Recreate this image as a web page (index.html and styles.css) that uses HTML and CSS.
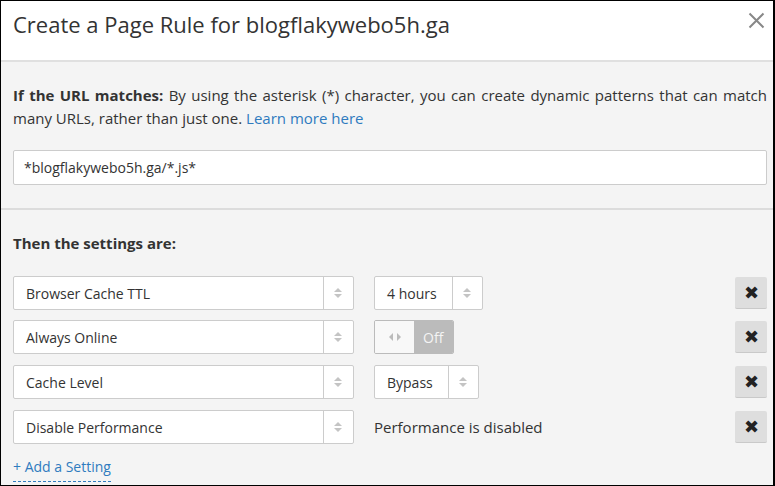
FILE: index.html
```html
<!DOCTYPE html>
<html lang="en">
  <head>
    <meta charset="UTF-8" />
    <meta name="viewport" content="width=device-width, initial-scale=1.0" />
    <title>Create a Page Rule</title>
    <link rel="stylesheet" href="styles.css">
  </head>
  <body>
    <div class="modal">
      <div class="modal__header">
        <h1>Create a Page Rule for blogflakywebo5h.ga</h1>
        <button type="button" class="close" aria-label="Close">
          <svg width="17" height="17" viewBox="0 0 17 17">
            <path d="M1.5 1.5 L15.5 15.5 M15.5 1.5 L1.5 15.5" stroke="#888" stroke-width="2" fill="none" />
          </svg>
        </button>
      </div>

      <div class="section section--url">
        <p class="help">
          <strong>If the URL matches:</strong> By using the asterisk (*) character, you can create dynamic patterns that can match many URLs, rather than just one. <a href="#">Learn more here</a>
        </p>
        <input class="field" type="text" value="*blogflakywebo5h.ga/*.js*" />
      </div>

      <div class="section section--settings">
        <h2>Then the settings are:</h2>

        <div class="rule">
          <div class="select select--setting"><span>Browser Cache TTL</span><i class="arrows"></i></div>
          <div class="select select--value ttl"><span>4 hours</span><i class="arrows"></i></div>
          <button type="button" class="remove">&#10006;</button>
        </div>

        <div class="rule">
          <div class="select select--setting"><span>Always Online</span><i class="arrows"></i></div>
          <div class="toggle">
            <span class="toggle__knob">
              <svg width="12" height="8" viewBox="0 0 12 8">
                <path d="M4 0 L0 4 L4 8 Z M8 0 L12 4 L8 8 Z" fill="#bbb" />
              </svg>
            </span>
            <span class="toggle__label">Off</span>
          </div>
          <button type="button" class="remove">&#10006;</button>
        </div>

        <div class="rule">
          <div class="select select--setting"><span>Cache Level</span><i class="arrows"></i></div>
          <div class="select select--value bypass"><span>Bypass</span><i class="arrows"></i></div>
          <button type="button" class="remove">&#10006;</button>
        </div>

        <div class="rule">
          <div class="select select--setting"><span>Disable Performance</span><i class="arrows"></i></div>
          <div class="note">Performance is disabled</div>
          <button type="button" class="remove">&#10006;</button>
        </div>

        <a href="#" class="add">+ Add a Setting</a>
      </div>
    </div>
  </body>
</html>
```

FILE: styles.css
```css
html,
body {
  margin: 0;
  height: 100%;
  background: #000;
}

body {
  font-family: "Open Sans", "Liberation Sans", sans-serif;
  color: #333;
}

.modal {
  box-sizing: border-box;
  height: 484px;
  margin: 1px 2px 1px 1px;
  background: #f4f4f4;
  overflow: hidden;
}

/* Header */
.modal__header {
  display: flex;
  justify-content: space-between;
  align-items: flex-start;
  height: 59px;
  background: #fff;
  border-bottom: 2px solid #e0e0e0;
}

.modal__header h1 {
  margin: 6px 0 0 12px;
  font-size: 22px;
  font-weight: 400;
  line-height: 34px;
  color: #333;
}

.close {
  margin: 11px 8px 0 0;
  padding: 0;
  border: none;
  background: none;
  cursor: pointer;
}

/* Sections */
.section {
  padding: 0 6px 0 12px;
}

.section--url {
  padding-top: 22px;
  padding-bottom: 23px;
  border-bottom: 2px solid #dcdcdc;
}

.help {
  margin: 0 0 20px;
  font-size: 15px;
  line-height: 23px;
  text-align: justify;
}

.help strong {
  font-weight: 700;
}

.help a,
.add {
  color: #2f7bbf;
  text-decoration: none;
}

.field {
  box-sizing: border-box;
  display: block;
  width: 100%;
  height: 35px;
  padding: 0 10px;
  border: 1px solid #ccc;
  border-radius: 2px;
  background: #fff;
  font-family: inherit;
  font-size: 14px;
  color: #333;
}

.section--settings h2 {
  margin: 0;
  padding: 22px 0 21px;
  font-size: 15px;
  line-height: 23px;
  font-weight: 700;
}

/* Rule rows */
.rule {
  display: flex;
  align-items: center;
  height: 34px;
  margin-bottom: 11px;
}

.rule:first-of-type {
  margin-bottom: 10px;
}

.select {
  box-sizing: border-box;
  display: flex;
  align-items: center;
  height: 34px;
  border: 1px solid #ccc;
  border-radius: 2px;
  background: #fff;
  font-size: 14px;
}

.select span {
  flex: 1;
  padding-left: 12px;
  white-space: nowrap;
}

.select .arrows {
  position: relative;
  align-self: stretch;
  width: 29px;
  border-left: 1px solid #ccc;
}

.select .arrows::before,
.select .arrows::after {
  content: "";
  position: absolute;
  left: 10px;
  border-left: 4px solid transparent;
  border-right: 4px solid transparent;
}

.select .arrows::before {
  top: 11px;
  border-bottom: 4px solid #c4c4c4;
}

.select .arrows::after {
  top: 17px;
  border-top: 4px solid #c4c4c4;
}

.select--setting {
  width: 341px;
  margin-right: 20px;
}

.ttl {
  width: 109px;
}

.bypass {
  width: 105px;
}

.toggle {
  box-sizing: border-box;
  display: flex;
  width: 80px;
  height: 34px;
  border: 1px solid #bbb;
  border-radius: 2px;
  overflow: hidden;
  font-size: 14px;
}

.toggle__knob {
  display: flex;
  align-items: center;
  justify-content: center;
  width: 39px;
  background: #f8f8f8;
}

.toggle__label {
  display: flex;
  align-items: center;
  flex: 1;
  padding-left: 9px;
  background: #bbb;
  color: #f4f4f4;
}

.note {
  font-size: 15px;
}

.remove {
  display: flex;
  align-items: center;
  justify-content: center;
  width: 32px;
  height: 32px;
  margin-left: auto;
  padding: 0;
  border: none;
  border-bottom: 1px solid #c9c9c9;
  border-radius: 2px;
  background: #dedede;
  color: #222;
  font-size: 18px;
  line-height: 1;
  cursor: pointer;
}

.add {
  display: inline-block;
  margin-top: 0;
  font-size: 14px;
  line-height: 20px;
  padding-bottom: 4px;
  border-bottom: 1px dashed #2f7bbf;
}
```
